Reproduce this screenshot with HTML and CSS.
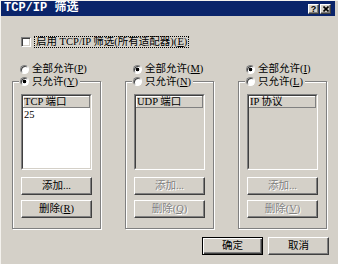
FILE: index.html
```html
<!DOCTYPE html>
<html lang="zh-CN">
<head>
<meta charset="utf-8">
<title>TCP/IP 筛选</title>
<link rel="stylesheet" href="styles.css">
</head>
<body>
<div class="window">
  <div class="titlebar">
    <span class="title">TCP/IP 筛选</span>
    <div class="tbtns">
      <span class="tbtn help">?</span>
      <span class="tbtn close"><svg width="6" height="6" viewBox="0 0 6 6"><path d="M0.5 0.5L5.5 5.5M5.5 0.5L0.5 5.5" stroke="#000" stroke-width="1.6"/></svg></span>
    </div>
  </div>
  <div class="content">
    <div class="enable">
      <span class="checkbox"></span>
      <span class="focus">启用 TCP/IP 筛选(所有适配器)(<u>E</u>)</span>
    </div>
    <div class="columns">
      <div class="col">
        <div class="radio-row"><span class="radio"></span><span>全部允许(<u>P</u>)</span></div>
        <fieldset class="group">
          <legend><span class="radio on"></span><span>只允许(<u>Y</u>)</span></legend>
          <div class="list">
            <div class="list-inner white">
              <div class="list-head">TCP 端口</div>
              <div class="list-item">25</div>
            </div>
          </div>
          <div class="btn first">添加...</div>
          <div class="btn">删除(<u>R</u>)</div>
        </fieldset>
      </div>
      <div class="col">
        <div class="radio-row"><span class="radio on"></span><span>全部允许(<u>M</u>)</span></div>
        <fieldset class="group">
          <legend><span class="radio"></span><span>只允许(<u>N</u>)</span></legend>
          <div class="list">
            <div class="list-inner">
              <div class="list-head">UDP 端口</div>
            </div>
          </div>
          <div class="btn first disabled">添加...</div>
          <div class="btn disabled">删除(<u>Q</u>)</div>
        </fieldset>
      </div>
      <div class="col">
        <div class="radio-row"><span class="radio on"></span><span>全部允许(<u>I</u>)</span></div>
        <fieldset class="group">
          <legend><span class="radio"></span><span>只允许(<u>L</u>)</span></legend>
          <div class="list">
            <div class="list-inner">
              <div class="list-head">IP 协议</div>
            </div>
          </div>
          <div class="btn first disabled">添加...</div>
          <div class="btn disabled">删除(<u>V</u>)</div>
        </fieldset>
      </div>
    </div>
    <div class="footer">
      <div class="btn wide default">确定</div>
      <div class="btn wide">取消</div>
    </div>
  </div>
</div>
</body>
</html>
```
FILE: styles.css
```css
* { box-sizing: border-box; }
html, body { margin: 0; padding: 0; background: #d4d0c8; }
body {
  font-family: "Liberation Serif", "Noto Sans CJK SC", serif;
  font-size: 10.5px;
  line-height: 12px;
  color: #000;
}
u { text-decoration: underline; text-underline-offset: 1px; }

.window {
  width: 338px;
  height: 264px;
  background: #d4d0c8;
  border-top: 1px solid #f4f2ee;
  border-left: 1px solid #f4f2ee;
  overflow: hidden;
}

.titlebar {
  height: 15px;
  margin-right: 3px;
  background: #0a246a;
  color: #fff;
  display: flex;
  align-items: center;
  justify-content: space-between;
  padding: 0 4px 0 3px;
}
.title {
  font-family: "Liberation Mono", "Noto Sans CJK SC", monospace;
  font-weight: bold;
  font-size: 12px;
  line-height: 15px;
}
.tbtns { display: flex; gap: 1px; }
.tbtn {
  width: 11px;
  height: 10px;
  background: #d4d0c8;
  border: 1px solid;
  border-color: #fff #404040 #404040 #fff;
  box-shadow: inset -1px -1px #808080;
  display: flex;
  align-items: center;
  justify-content: center;
  color: #000;
  font-family: "Liberation Sans", sans-serif;
  font-weight: bold;
  font-size: 9px;
  line-height: 8px;
}

.content { padding: 20px 9px 0 11px; }

.enable {
  display: flex;
  align-items: center;
  height: 12px;
  margin-left: 9px;
  gap: 3px;
}
.checkbox {
  width: 10px;
  height: 10px;
  flex: none;
  background: #fff;
  border: 1px solid;
  border-color: #808080 #fff #fff #808080;
  box-shadow: inset 1px 1px #404040, inset -1px -1px #d4d0c8;
}
.focus {
  border: 1px dotted #000;
  padding: 0 1px;
  line-height: 10px;
  height: 12px;
  white-space: nowrap;
}

.columns {
  display: flex;
  gap: 24px;
  margin-top: 15px;
}
.col { width: 89px; flex: none; }

.radio-row {
  display: flex;
  align-items: center;
  height: 12px;
  padding-left: 8px;
  gap: 3px;
  white-space: nowrap;
}
.radio {
  width: 9px;
  height: 9px;
  flex: none;
  border-radius: 50%;
  background: #fff;
  border: 1px solid;
  border-color: #808080 #fff #fff #808080;
  box-shadow: inset 1px 1px #404040;
}
.radio.on {
  background: radial-gradient(circle at 50% 50%, #000 0, #000 1.6px, #fff 2.1px);
}

.group {
  margin: 0;
  min-width: 0;
  padding: 6px 8px 10px 8px;
  border: 1px solid #808080;
  box-shadow: inset 1px 1px #fff, 1px 1px #fff;
}
.group legend {
  display: flex;
  align-items: center;
  gap: 3px;
  height: 13px;
  line-height: 13px;
  margin-left: -2px;
  padding: 0 2px 0 1px;
  background: #d4d0c8;
  white-space: nowrap;
}

.list {
  height: 76px;
  border: 1px solid;
  border-color: #808080 #fff #fff #808080;
}
.list-inner {
  height: 100%;
  border: 1px solid;
  border-color: #404040 #d4d0c8 #d4d0c8 #404040;
  background: #d4d0c8;
}
.list-inner.white { background: #fff; }
.list-head {
  height: 12px;
  line-height: 11px;
  padding-left: 1px;
  background: #d4d0c8;
  border-right: 1px solid #808080;
  border-bottom: 1px solid #808080;
  box-shadow: inset 1px 1px #fff;
  white-space: nowrap;
}
.list-item {
  height: 13px;
  line-height: 13px;
  padding-left: 1px;
}

.btn {
  height: 18px;
  margin-top: 5px;
  background: #d4d0c8;
  border: 1px solid;
  border-color: #fff #404040 #404040 #fff;
  box-shadow: inset -1px -1px #808080;
  display: flex;
  align-items: center;
  justify-content: center;
  white-space: nowrap;
}
.btn.first { margin-top: 7px; }
.btn.disabled { color: #808080; text-shadow: 1px 1px 0 #fff; }

.footer {
  display: flex;
  justify-content: flex-end;
  gap: 5px;
  margin-top: 8px;
}
.btn.wide { width: 61px; margin-top: 0; }
.btn.default {
  border: 1px solid #000;
  box-shadow: inset 1px 1px #fff, inset -1px -1px #404040, inset -2px -2px #808080;
}
```
